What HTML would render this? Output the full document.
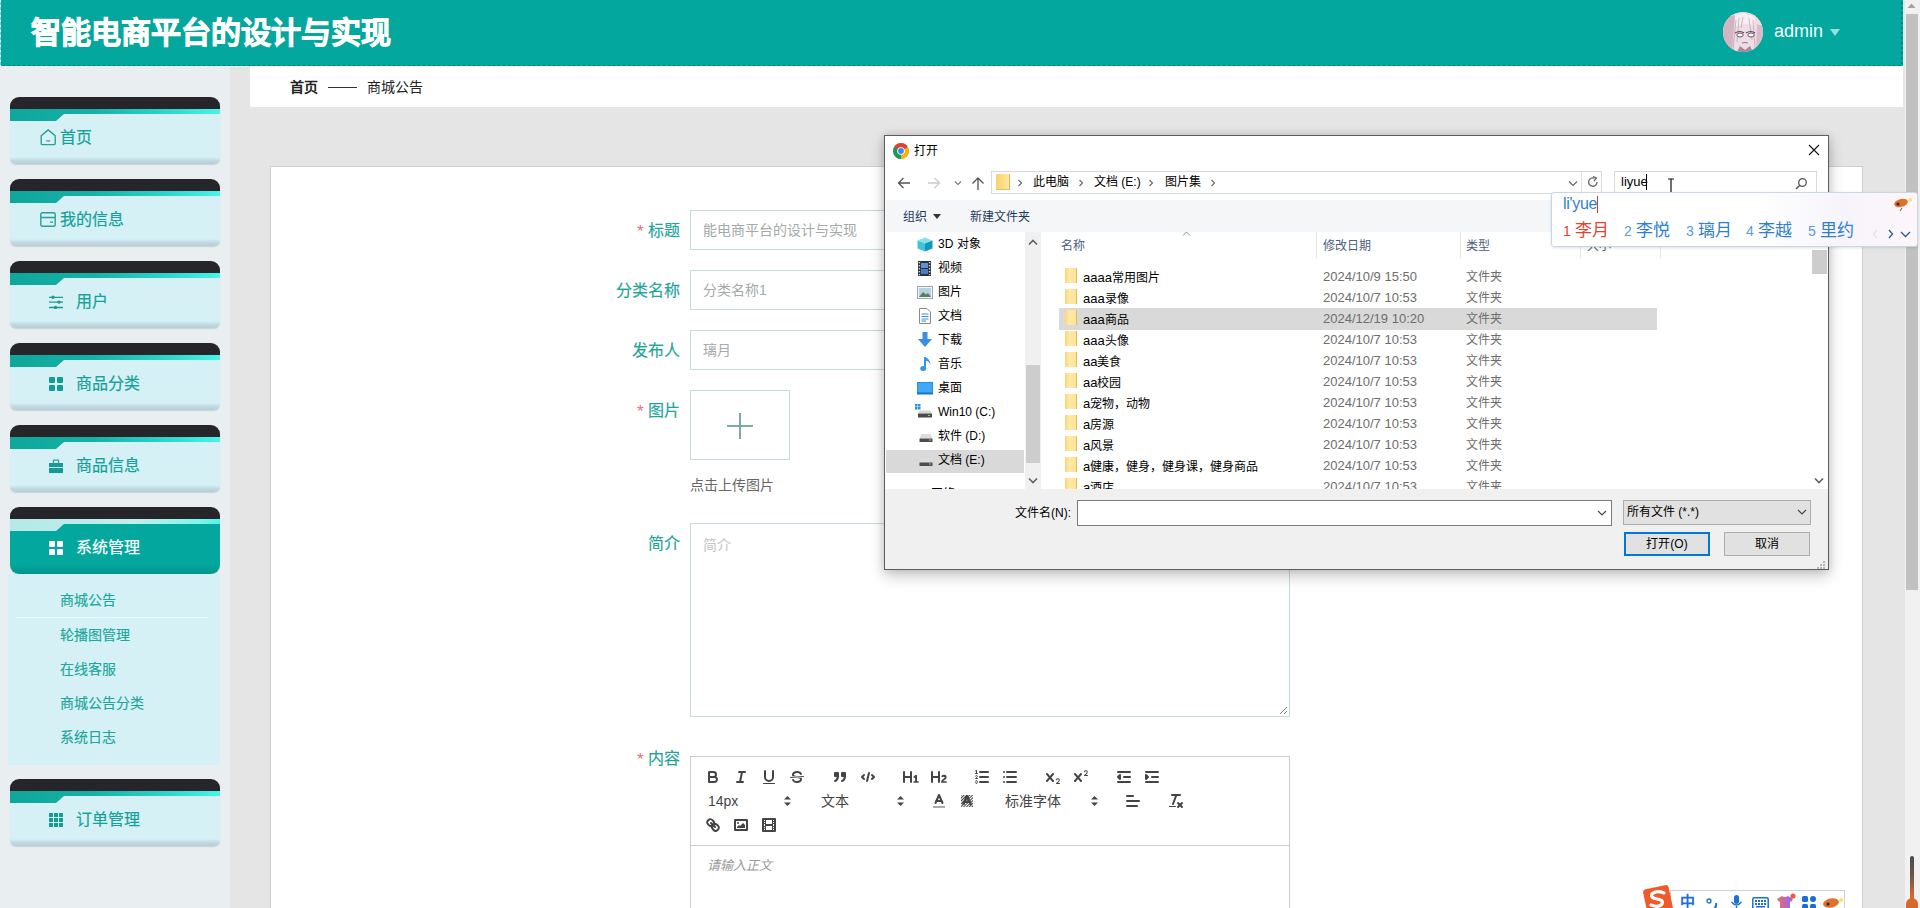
<!DOCTYPE html>
<html lang="zh-CN"><head><meta charset="utf-8">
<style>
*{box-sizing:border-box;margin:0;padding:0}
html,body{width:1920px;height:908px;overflow:hidden;font-family:"Liberation Sans",sans-serif;background:#e5e5e5;position:relative}
.a{position:absolute}
.nw{white-space:nowrap}
/* header */
#hdr{left:0;top:0;width:1903px;height:66px;background:#03a79d}
#hdrB{left:1px;top:65px;width:1902px;height:1.5px;background:repeating-linear-gradient(90deg,#03a79d 0 2px,#0a7f75 2px 4px,#03a79d 4px 5px)}
#hdrB2{left:0;top:66px;width:1903px;height:1px;background:#c9fbf2}
#hdrR{left:1901px;top:0;width:1.5px;height:66px;background:repeating-linear-gradient(180deg,#03a79d 0 2px,#0a7f75 2px 4px,#03a79d 4px 5px)}
#hdrR2{left:1902.5px;top:0;width:1.5px;height:67px;background:#d2fdf6}
#hdrL{left:0;top:0;width:1px;height:66px;background:repeating-linear-gradient(180deg,#e9fffb 0 2.5px,#7fd0c8 2.5px 5px)}
#title{left:31px;top:13px;font-size:30px;font-weight:900;color:#fff;-webkit-text-stroke:0.9px #fff;line-height:40px}
#avatar{left:1723px;top:12px;width:40px;height:40px;border-radius:50%;background:radial-gradient(circle at 50% 45%,#f6eef2 0,#ecdce4 45%,#c9a9b8 80%,#9b7d8c 100%);overflow:hidden}
#admin{left:1774px;top:20px;font-size:18px;color:#f2fffd;line-height:22px}
#tri{left:1830px;top:29px;width:0;height:0;border-left:5px solid transparent;border-right:5px solid transparent;border-top:7px solid #93e3dc}
/* sidebar */
#side{left:0;top:66px;width:230px;height:842px;background:#e9eff1}
.card{position:absolute;left:10px;width:210px;height:67px;border-radius:9px 9px 6px 6px;overflow:hidden;background:linear-gradient(180deg,#26262a 0,#26262a 14px,transparent 14px);box-shadow:0 1px 1px rgba(100,130,140,.25)}
.card .st{position:absolute;left:0;top:12px;width:100%;height:13px;background:linear-gradient(90deg,#0fa69b 0,#15b2a7 40%,#2cd6ca 75%,#47f5e8 100%)}
.card .bd{position:absolute;left:0;top:17px;width:100%;height:50px;background:linear-gradient(180deg,#d5f1f6 0,#d5f1f6 86%,#c0d9e2 93%,#b5cdd6 100%);clip-path:polygon(0 7px,46px 7px,54px 0,100% 0,100% 100%,0 100%)}
.card .lbl{position:absolute;top:30px;height:22px;line-height:22px;font-size:16px;color:#15a198;white-space:nowrap;-webkit-text-stroke:0.2px #15a198}
.card .ic{position:absolute}
.card.act .st{background:linear-gradient(90deg,#b6e9e6 0,#c0eeeb 60%,#7ff5ec 90%,#4ff4e8 100%)}
.card.act .bd{background:linear-gradient(180deg,#03a79d 0,#03a79d 80%,#02968c 100%)}
.card.act{border-radius:9px}
.card.act .lbl{color:#fff;-webkit-text-stroke:0.2px #fff}
#sub{left:8px;top:574px;width:212px;height:191px;background:#d5f1f6}
#sub .it{position:absolute;left:52px;font-size:14px;color:#20a69c;line-height:20px;white-space:nowrap;-webkit-text-stroke:0.15px #20a69c}
#sub .sep{position:absolute;left:8px;top:43px;width:192px;height:1px;background:#ecfbfd}
/* content */
#crumb{left:250px;top:66px;width:1653px;height:41px;background:#fff}
#form{left:270px;top:166px;width:1593px;height:760px;background:#fff;border:1px solid #cfcfcf}
.lab{position:absolute;font-size:16px;color:#22a399;white-space:nowrap;line-height:20px;text-align:right;-webkit-text-stroke:0.15px #22a399}
.star{position:absolute;font-size:17px;color:#ee6a83;line-height:17px}
.inp{position:absolute;left:690px;width:600px;height:40px;border:1px solid #c6dcd9;background:#fff;font-size:14px;color:#a3aaa9;padding-left:12px;line-height:38px;white-space:nowrap}
#sb{left:1905px;top:0;width:15px;height:908px;background:#f1f1f1}
#sbT{left:1906px;top:14px;width:12px;height:576px;background:#c1c1c1}
</style></head><body>
<div id="hdr" class="a"></div>
<div id="hdrB" class="a"></div>
<div id="hdrR" class="a"></div>
<div id="hdrB2" class="a"></div>
<div id="hdrR2" class="a"></div>
<div id="hdrL" class="a"></div>
<div id="title" class="a nw">智能电商平台的设计与实现</div>
<div id="avatar" class="a"><svg width="40" height="40" viewBox="0 0 40 40"><rect width="40" height="40" fill="#eddde4"/><path d="M0 10 Q6 4 12 3 L9 40 H0Z" fill="#c9a6b6" opacity=".75"/><path d="M40 14 L34 12 L33 40 H40Z" fill="#c5a2b3" opacity=".55"/><path d="M12 3 Q22 -1 32 5 L31 14 Q22 9 12 15Z" fill="#f6eef2"/><path d="M13 8 L10 38 M16 6 L14 30 M30 8 L32 36 M26 6 L29 28 M20 5 L18 16" stroke="#b08c9d" stroke-width=".8" opacity=".7"/><path d="M12 21 Q17 18 21 21 M23 21 Q28 18 32 21" stroke="#5a4350" stroke-width="1.2" fill="none"/><ellipse cx="17" cy="23" rx="3.2" ry="2" fill="#fff" stroke="#6b5260" stroke-width="1"/><ellipse cx="28" cy="23" rx="3.2" ry="2" fill="#fff" stroke="#6b5260" stroke-width="1"/><path d="M19 31 Q22 30 25 31" stroke="#8a6a7a" stroke-width=".9" fill="none"/><path d="M14 40 L17 34 L22 38 L27 34 L30 40Z" fill="#8d6b7c" opacity=".75"/></svg></div>
<div id="admin" class="a nw">admin</div>
<div id="tri" class="a"></div>

<div id="side" class="a"></div>

<div class="card" style="top:97px"><div class="st"></div><div class="bd"></div>
<svg class="ic" style="left:30px;top:32px" width="17" height="17" viewBox="0 0 17 17"><path d="M1.2 6.8 L8.2 0.9 L15.2 6.8 V14.6 Q15.2 15.6 14.2 15.6 H2.2 Q1.2 15.6 1.2 14.6 Z" fill="none" stroke="#2a9f97" stroke-width="1.4" stroke-linejoin="round"/><path d="M6.2 11.5 Q8.2 12.8 10.2 11.5" fill="none" stroke="#2a9f97" stroke-width="1.3"/></svg>
<div class="lbl" style="left:50px">首页</div></div>

<div class="card" style="top:179px"><div class="st"></div><div class="bd"></div>
<svg class="ic" style="left:30px;top:33px" width="16" height="15" viewBox="0 0 16 15"><rect x="0.8" y="0.8" width="14.4" height="13.4" rx="1.5" fill="none" stroke="#2a9f97" stroke-width="1.4"/><path d="M1 5.5 H15" stroke="#2a9f97" stroke-width="1.3"/><path d="M10 10.2 H13" stroke="#2a9f97" stroke-width="1.2"/></svg>
<div class="lbl" style="left:50px">我的信息</div></div>

<div class="card" style="top:261px"><div class="st"></div><div class="bd"></div>
<svg class="ic" style="left:39px;top:34px" width="14" height="14" viewBox="0 0 14 14"><path d="M0 2.3 H14 M0 7.1 H14 M0 12.5 H14" stroke="#1f9a90" stroke-width="1.3"/><circle cx="4" cy="2.3" r="1.7" fill="#1f9a90"/><circle cx="10" cy="7.1" r="1.7" fill="#1f9a90"/><circle cx="6.5" cy="12.5" r="1.7" fill="#1f9a90"/></svg>
<div class="lbl" style="left:66px">用户</div></div>

<div class="card" style="top:343px"><div class="st"></div><div class="bd"></div>
<svg class="ic" style="left:39px;top:34px" width="14" height="14" viewBox="0 0 14 14"><rect x="0" y="0" width="6" height="6" rx="1" fill="#139c92"/><rect x="8" y="0" width="6" height="6" rx="1" fill="#139c92"/><rect x="0" y="8" width="6" height="6" rx="1" fill="#139c92"/><rect x="8" y="8" width="6" height="6" rx="1" fill="#139c92"/></svg>
<div class="lbl" style="left:66px">商品分类</div></div>

<div class="card" style="top:425px"><div class="st"></div><div class="bd"></div>
<svg class="ic" style="left:39px;top:34px" width="14" height="14" viewBox="0 0 14 14"><path d="M4.5 4 V1.2 H9.5 V4" fill="none" stroke="#3f9f98" stroke-width="1.3"/><rect x="0" y="4" width="14" height="4" fill="#139c92"/><rect x="0" y="9" width="14" height="5" fill="#139c92"/></svg>
<div class="lbl" style="left:66px">商品信息</div></div>

<div class="card act" style="top:507px"><div class="st"></div><div class="bd"></div>
<svg class="ic" style="left:39px;top:34px" width="14" height="14" viewBox="0 0 14 14"><rect x="0" y="0" width="6" height="6" rx="1" fill="#fff"/><rect x="8" y="0" width="6" height="6" rx="1" fill="#fff"/><rect x="0" y="8" width="6" height="6" rx="1" fill="#fff"/><rect x="8" y="8" width="6" height="6" rx="1" fill="#fff"/></svg>
<div class="lbl" style="left:66px">系统管理</div></div>

<div id="sub" class="a">
<div class="it" style="top:16px">商城公告</div>
<div class="sep"></div>
<div class="it" style="top:51px">轮播图管理</div>
<div class="it" style="top:85px">在线客服</div>
<div class="it" style="top:119px">商城公告分类</div>
<div class="it" style="top:153px">系统日志</div>
</div>

<div class="card" style="top:779px"><div class="st"></div><div class="bd"></div>
<svg class="ic" style="left:39px;top:34px" width="14" height="14" viewBox="0 0 14 14"><g fill="#139c92"><rect x="0" y="0" width="4" height="4"/><rect x="5" y="0" width="4" height="4"/><rect x="10" y="0" width="4" height="4"/><rect x="0" y="5" width="4" height="4"/><rect x="5" y="5" width="4" height="4"/><rect x="10" y="5" width="4" height="4"/><rect x="0" y="10" width="4" height="4"/><rect x="5" y="10" width="4" height="4"/><rect x="10" y="10" width="4" height="4"/></g></svg>
<div class="lbl" style="left:66px">订单管理</div></div>

<div id="crumb" class="a"></div>
<div class="a nw" style="left:290px;top:77px;font-size:14px;font-weight:bold;color:#222;line-height:20px">首页</div>
<div class="a" style="left:328px;top:87px;width:29px;height:1px;background:#333"></div>
<div class="a nw" style="left:367px;top:77px;font-size:14px;color:#222;line-height:20px">商城公告</div>

<div id="form" class="a"></div>
<div id="sb" class="a"></div>
<div id="sbT" class="a"></div>
<svg class="a" style="left:1907px;top:3px" width="9" height="6" viewBox="0 0 9 6"><path d="M0.5 5 L4.5 0.5 L8.5 5Z" fill="#a3a3a3"/></svg>
<!-- form fields -->
<div class="star" style="left:637px;top:223px">*</div>
<div class="lab" style="left:648px;top:221px">标题</div>
<div class="inp" style="top:210px">能电商平台的设计与实现</div>
<div class="lab" style="left:616px;top:281px">分类名称</div>
<div class="inp" style="top:270px">分类名称1</div>
<div class="lab" style="left:632px;top:341px">发布人</div>
<div class="inp" style="top:330px">璃月</div>
<div class="star" style="left:637px;top:403px">*</div>
<div class="lab" style="left:648px;top:401px">图片</div>
<div class="a" style="left:690px;top:390px;width:100px;height:70px;border:1px solid #c6dcd9;background:#fff"></div>
<div class="a" style="left:727px;top:425px;width:26px;height:2px;background:#7fa9a6"></div>
<div class="a" style="left:739px;top:413px;width:2px;height:26px;background:#7fa9a6"></div>
<div class="a nw" style="left:690px;top:475px;font-size:14px;color:#666;line-height:20px">点击上传图片</div>
<div class="lab" style="left:648px;top:534px">简介</div>
<div class="a" style="left:690px;top:523px;width:600px;height:194px;border:1px solid #c6dcd9;background:#fff"></div>
<div class="a nw" style="left:703px;top:535px;font-size:14px;color:#c4c4c4;line-height:20px">简介</div>
<svg class="a" style="left:1279px;top:706px" width="9" height="9" viewBox="0 0 9 9"><path d="M8 1 L1 8 M8 5 L5 8" stroke="#777" stroke-width="1"/></svg>
<div class="star" style="left:637px;top:751px">*</div>
<div class="lab" style="left:648px;top:749px">内容</div>
<div class="a" style="left:690px;top:756px;width:600px;height:200px;border:1px solid #ccc;background:#fff"></div>
<div class="a" style="left:691px;top:845px;width:598px;height:1px;background:#ccc"></div>
<div class="a nw" style="left:707px;top:856px;font-size:13px;color:#999;font-style:italic;line-height:20px">请输入正文</div>
<!-- quill toolbar -->
<style>
.qb{position:absolute;width:18px;height:18px}
.qb .s{fill:none;stroke:#444;stroke-width:2;stroke-linecap:round;stroke-linejoin:round}
.qb .t{fill:none;stroke:#444;stroke-width:1;stroke-linecap:round;stroke-linejoin:round}
.qb .f{fill:#444}
.qpk{position:absolute;font-size:14px;color:#444;line-height:20px;white-space:nowrap}
</style>
<!-- row1 y=768 -->
<svg class="qb" style="left:704px;top:768px" viewBox="0 0 18 18"><path class="s" d="M5,4H9.5A2.5,2.5,0,0,1,12,6.5v0A2.5,2.5,0,0,1,9.5,9H5A0,0,0,0,1,5,9V4A0,0,0,0,1,5,4Z"/><path class="s" d="M5,9h5.5A2.5,2.5,0,0,1,13,11.5v0A2.5,2.5,0,0,1,10.5,14H5a0,0,0,0,1,0,0V9A0,0,0,0,1,5,9Z"/></svg>
<svg class="qb" style="left:732px;top:768px" viewBox="0 0 18 18"><line class="s" x1="7" x2="13" y1="4" y2="4"/><line class="s" x1="5" x2="11" y1="14" y2="14"/><line class="s" x1="8" x2="10" y1="14" y2="4"/></svg>
<svg class="qb" style="left:760px;top:768px" viewBox="0 0 18 18"><path class="s" d="M5,3V9a4.012,4.012,0,0,0,4,4H9a4.012,4.012,0,0,0,4-4V3"/><rect class="f" height="1" rx="0.5" ry="0.5" width="12" x="3" y="15"/></svg>
<svg class="qb" style="left:788px;top:768px" viewBox="0 0 18 18"><line class="t" x1="15.5" x2="2.5" y1="8.5" y2="9.5"/><path class="f" d="M9.007,8C6.542,7.791,6,7.519,6,6.5,6,5.792,7.283,5,9,5c1.571,0,2.765.679,2.969,1.309a1,1,0,0,0,1.9-.617C13.356,4.106,11.354,3,9,3,6.2,3,4,4.538,4,6.5a3.2,3.2,0,0,0,.5,1.843Z"/><path class="f" d="M8.984,10C11.457,10.208,12,10.479,12,11.5c0,.708-1.283,1.5-3,1.5-1.571,0-2.765-.679-2.969-1.309a1,1,0,1,0-1.9.617C4.644,13.894,6.646,15,9,15c2.8,0,5-1.538,5-3.5a3.2,3.2,0,0,0-.5-1.843Z"/></svg>
<svg class="qb" style="left:831px;top:768px" viewBox="0 0 18 18"><rect class="f s" height="3" width="3" x="4" y="5"/><rect class="f s" height="3" width="3" x="11" y="5"/><path class="f s" d="M7,8c0,4.031-3,5-3,5"/><path class="f s" d="M14,8c0,4.031-3,5-3,5"/></svg>
<svg class="qb" style="left:859px;top:768px" viewBox="0 0 18 18"><polyline class="s" points="5 7 3 9 5 11"/><polyline class="s" points="13 7 15 9 13 11"/><line class="s" x1="10" x2="8" y1="5" y2="13"/></svg>
<svg class="qb" style="left:902px;top:768px" viewBox="0 0 18 18"><path class="f" d="M10,4V14a1,1,0,0,1-2,0V10H3v4a1,1,0,0,1-2,0V4A1,1,0,0,1,3,4V8H8V4a1,1,0,0,1,2,0Zm6.06787,9.209H14.98975V7.59863a.54085.54085,0,0,0-.605-.60547h-.62744a1.01119,1.01119,0,0,0-.748.29688L11.645,8.56641a.5435.5435,0,0,0-.022.8584l.28613.30762a.53861.53861,0,0,0,.84717.0332l.09912-.08789a1.2137,1.2137,0,0,0,.2417-.35254h.02246s-.01123.30859-.01123.60547V13.209H12.041a.54085.54085,0,0,0-.605.60547v.43945a.54085.54085,0,0,0,.605.60547h4.02686a.54085.54085,0,0,0,.605-.60547v-.43945A.54085.54085,0,0,0,16.06787,13.209Z"/></svg>
<svg class="qb" style="left:930px;top:768px" viewBox="0 0 18 18"><path class="f" d="M16.73975,13.81445v.43945a.54085.54085,0,0,1-.605.60547H11.855a.58392.58392,0,0,1-.64893-.60547V14.0127c0-2.90527,3.39941-3.42187,3.39941-4.55469a.77675.77675,0,0,0-.84717-.78125,1.17684,1.17684,0,0,0-.83594.38477c-.2749.26367-.561.374-.85791.13184l-.4292-.34082c-.30811-.24219-.38525-.51758-.1543-.81445a2.97155,2.97155,0,0,1,2.45361-1.17676,2.45393,2.45393,0,0,1,2.68408,2.40918c0,2.45312-3.1792,2.92676-3.27832,3.93848h2.79443A.54085.54085,0,0,1,16.73975,13.81445ZM9,3A.99974.99974,0,0,0,8,4V8H3V4A1,1,0,0,0,1,4V14a1,1,0,0,0,2,0V10H8v4a1,1,0,0,0,2,0V4A.99974.99974,0,0,0,9,3Z"/></svg>
<svg class="qb" style="left:973px;top:768px" viewBox="0 0 18 18"><line class="s" x1="7" x2="15" y1="4" y2="4"/><line class="s" x1="7" x2="15" y1="9" y2="9"/><line class="s" x1="7" x2="15" y1="14" y2="14"/><line class="t" x1="2.5" x2="4.5" y1="5.5" y2="5.5"/><path class="f" d="M3.5,6A0.5,0.5,0,0,1,3,5.5V3.085l-0.276.138A0.5,0.5,0,0,1,2.053,3c-0.124-.247-0.023-0.324.224-0.447l1-.5A0.5,0.5,0,0,1,4,2.5v3A0.5,0.5,0,0,1,3.5,6Z"/><path class="t" d="M4.5,10.5h-2c0-.234,1.85-1.076,1.85-2.234A0.959,0.959,0,0,0,2.5,8.156"/><path class="t" d="M2.5,14.846a0.959,0.959,0,0,0,1.85-.109A0.7,0.7,0,0,0,3.75,14a0.688,0.688,0,0,0,.6-0.736,0.959,0.959,0,0,0-1.85-.109"/></svg>
<svg class="qb" style="left:1001px;top:768px" viewBox="0 0 18 18"><line class="s" x1="6" x2="15" y1="4" y2="4"/><line class="s" x1="6" x2="15" y1="9" y2="9"/><line class="s" x1="6" x2="15" y1="14" y2="14"/><line class="s" x1="3" x2="3" y1="4" y2="4"/><line class="s" x1="3" x2="3" y1="9" y2="9"/><line class="s" x1="3" x2="3" y1="14" y2="14"/></svg>
<svg class="qb" style="left:1044px;top:768px" viewBox="0 0 18 18"><path class="f" d="M15.5,15H13.861a3.858,3.858,0,0,0,1.914-2.975,1.8,1.8,0,0,0-1.6-1.751A1.921,1.921,0,0,0,12.021,11.7a0.50013,0.50013,0,1,0,.957.291h0a0.914,0.914,0,0,1,1.053-.725,0.81,0.81,0,0,1,.744.762c0,1.076-1.16971,1.86982-1.93971,2.43082A1.45639,1.45639,0,0,0,12,15.5a0.5,0.5,0,0,0,.5.5h3A0.5,0.5,0,0,0,15.5,15Z"/><path class="f" d="M9.65,5.241a1,1,0,0,0-1.409.108L6,7.964,3.759,5.349A1,1,0,0,0,2.192,6.59178Q2.21541,6.6213,2.241,6.649L4.684,9.5,2.241,12.35A1,1,0,0,0,3.71,13.70722q0.02557-.02768.049-0.05722L6,11.036,8.241,13.65a1,1,0,1,0,1.567-1.24277Q9.78459,12.3777,9.759,12.35L7.316,9.5,9.759,6.651A1,1,0,0,0,9.65,5.241Z"/></svg>
<svg class="qb" style="left:1072px;top:768px" viewBox="0 0 18 18"><path class="f" d="M15.5,7H13.861a4.015,4.015,0,0,0,1.914-2.975,1.8,1.8,0,0,0-1.6-1.751A1.922,1.922,0,0,0,12.021,3.7a0.5,0.5,0,1,0,.957.291,0.917,0.917,0,0,1,1.053-.725,0.81,0.81,0,0,1,.744.762c0,1.077-1.164,1.925-1.934,2.486A1.423,1.423,0,0,0,12,7.5a0.5,0.5,0,0,0,.5.5h3A0.5,0.5,0,0,0,15.5,7Z"/><path class="f" d="M9.651,5.241a1,1,0,0,0-1.41.108L6,7.964,3.759,5.349a1,1,0,1,0-1.519,1.3L4.683,9.5,2.241,12.35a1,1,0,1,0,1.519,1.3L6,11.036,8.241,13.65a1,1,0,0,0,1.519-1.3L7.317,9.5,9.759,6.651A1,1,0,0,0,9.651,5.241Z"/></svg>
<svg class="qb" style="left:1115px;top:768px" viewBox="0 0 18 18"><line class="s" x1="3" x2="15" y1="14" y2="14"/><line class="s" x1="3" x2="15" y1="4" y2="4"/><line class="s" x1="9" x2="15" y1="9" y2="9"/><polyline class="s" points="5 7 5 11 3 9 5 7"/></svg>
<svg class="qb" style="left:1143px;top:768px" viewBox="0 0 18 18"><line class="s" x1="3" x2="15" y1="14" y2="14"/><line class="s" x1="3" x2="15" y1="4" y2="4"/><line class="s" x1="9" x2="15" y1="9" y2="9"/><polyline class="f s" points="3 7 3 11 5 9 3 7"/></svg>
<!-- row2 y=792 -->
<div class="qpk" style="left:708px;top:791px">14px</div>
<svg class="qb" style="left:779px;top:792px" viewBox="0 0 18 18"><polygon class="f" points="5 7.5 8.5 4 12 7.5"/><polygon class="f" points="5 10.5 8.5 14 12 10.5"/></svg>
<div class="qpk" style="left:821px;top:791px">文本</div>
<svg class="qb" style="left:892px;top:792px" viewBox="0 0 18 18"><polygon class="f" points="5 7.5 8.5 4 12 7.5"/><polygon class="f" points="5 10.5 8.5 14 12 10.5"/></svg>
<svg class="qb" style="left:930px;top:792px" viewBox="0 0 18 18"><line x1="3" x2="15" y1="15" y2="15" stroke="#aaa" stroke-width="2"/><polyline class="s" points="5.5 11 9 3 12.5 11"/><line class="s" x1="11.63" x2="6.38" y1="9" y2="9"/></svg>
<svg class="qb" style="left:958px;top:792px" viewBox="0 0 18 18"><defs><pattern id="hp" width="2" height="2" patternUnits="userSpaceOnUse" patternTransform="rotate(45)"><rect width="1" height="2" fill="#444"/></pattern></defs><rect x="3" y="3" width="12" height="12" fill="url(#hp)"/><polyline class="s" points="5.5 12 9 4 12.5 12" stroke="#fff" stroke-width="3"/><polyline class="s" points="5.5 12 9 4 12.5 12"/><line class="s" x1="11.63" x2="6.38" y1="10" y2="10"/></svg>
<div class="qpk" style="left:1005px;top:791px">标准字体</div>
<svg class="qb" style="left:1086px;top:792px" viewBox="0 0 18 18"><polygon class="f" points="5 7.5 8.5 4 12 7.5"/><polygon class="f" points="5 10.5 8.5 14 12 10.5"/></svg>
<svg class="qb" style="left:1124px;top:792px" viewBox="0 0 18 18"><line class="s" x1="3" x2="15" y1="9" y2="9"/><line class="s" x1="3" x2="13" y1="14" y2="14"/><line class="s" x1="3" x2="9" y1="4" y2="4"/></svg>
<svg class="qb" style="left:1167px;top:792px" viewBox="0 0 18 18"><line class="s" x1="5" x2="13" y1="3" y2="3"/><line class="s" x1="6" x2="9.35" y1="12" y2="3"/><line class="s" x1="11" x2="15" y1="11" y2="15"/><line class="s" x1="15" x2="11" y1="11" y2="15"/><rect class="f" height="1" rx="0.5" ry="0.5" width="7" x="2" y="14"/></svg>
<!-- row3 y=816 -->
<svg class="qb" style="left:704px;top:816px" viewBox="0 0 18 18"><line class="s" x1="7" x2="11" y1="7" y2="11"/><path class="s" d="M8.9,4.577a3.476,3.476,0,0,1,.36,4.679A3.476,3.476,0,0,1,4.577,8.9C3.185,7.5,2.035,6.4,4.217,4.217S7.5,3.185,8.9,4.577Z"/><path class="s" d="M13.423,9.1a3.476,3.476,0,0,0-4.679-.36,3.476,3.476,0,0,0,.36,4.679c1.392,1.392,2.5,2.542,4.679.36S14.815,10.5,13.423,9.1Z"/></svg>
<svg class="qb" style="left:732px;top:816px" viewBox="0 0 18 18"><rect class="s" height="10" width="12" x="3" y="4"/><circle class="f" cx="6" cy="7" r="1"/><polyline class="f" points="5 12 5 11 7 9 8 10 11 7 13 9 13 12 5 12"/></svg>
<svg class="qb" style="left:760px;top:816px" viewBox="0 0 18 18"><rect class="s" height="12" width="12" x="3" y="3"/><rect class="f" height="12" width="1" x="5" y="3"/><rect class="f" height="12" width="1" x="12" y="3"/><rect class="f" height="2" width="8" x="5" y="8"/><rect class="f" height="1" width="3" x="3" y="5"/><rect class="f" height="1" width="3" x="3" y="7"/><rect class="f" height="1" width="3" x="3" y="10"/><rect class="f" height="1" width="3" x="3" y="12"/><rect class="f" height="1" width="3" x="12" y="5"/><rect class="f" height="1" width="3" x="12" y="7"/><rect class="f" height="1" width="3" x="12" y="10"/><rect class="f" height="1" width="3" x="12" y="12"/></svg>
<style>
#dlg{left:884px;top:135px;width:945px;height:435px;background:#fff;border:1px solid #5c5c5c;box-shadow:0 6px 14px rgba(0,0,0,.22),0 0 8px rgba(0,0,0,.12);overflow:hidden}
#dlg .t{position:absolute;font-size:12px;line-height:16px;color:#000;white-space:nowrap}
.dr{position:absolute;height:21px;font-size:12px;line-height:21px;white-space:nowrap}
.fo{position:absolute;width:12px;height:15px;background:linear-gradient(90deg,#f8d775 0,#ffe9a6 40%,#ffe394 100%);border-right:1px solid #e8b94c}
.nv{position:absolute;left:52px;font-size:12px;line-height:24px;color:#000;white-space:nowrap}
.btn{position:absolute;background:#e1e1e1;border:1px solid #adadad;font-size:12px;line-height:22px;text-align:center;color:#000}
</style>
<div id="dlg" class="a">
 <!-- title -->
 <svg class="a" style="left:8px;top:7px" width="16" height="16" viewBox="0 0 16 16"><circle cx="8" cy="8" r="7.8" fill="#db4437"/><path d="M8 8 L1.2 4.1 A7.8 7.8 0 0 0 8 15.8 Z" fill="#0f9d58"/><path d="M8 8 L14.8 4.1 A7.8 7.8 0 0 1 8 15.8 Z" fill="#f4b400"/><path d="M8 8 L1.2 4.1 A7.8 7.8 0 0 1 14.8 4.1 Z" fill="#db4437"/><circle cx="8" cy="8" r="3.8" fill="#fff"/><circle cx="8" cy="8" r="2.9" fill="#4285f4"/></svg>
 <div class="t" style="left:29px;top:7px">打开</div>
 <svg class="a" style="left:923px;top:8px" width="12" height="12" viewBox="0 0 12 12"><path d="M1 1 L11 11 M11 1 L1 11" stroke="#111" stroke-width="1.1"/></svg>
 <!-- nav -->
 <svg class="a" style="left:12px;top:40px" width="14" height="14" viewBox="0 0 14 14"><path d="M13 7 H1.5 M6.5 2 L1.5 7 L6.5 12" fill="none" stroke="#555" stroke-width="1.3"/></svg>
 <svg class="a" style="left:42px;top:40px" width="14" height="14" viewBox="0 0 14 14"><path d="M1 7 H12.5 M7.5 2 L12.5 7 L7.5 12" fill="none" stroke="#c9c9c9" stroke-width="1.3"/></svg>
 <svg class="a" style="left:69px;top:44px" width="8" height="6" viewBox="0 0 8 6"><path d="M1 1.5 L4 4.5 L7 1.5" fill="none" stroke="#777" stroke-width="1.1"/></svg>
 <svg class="a" style="left:86px;top:40px" width="14" height="15" viewBox="0 0 14 15"><path d="M7 14 V2 M1.5 7.5 L7 2 L12.5 7.5" fill="none" stroke="#555" stroke-width="1.3"/></svg>
 <div class="a" style="left:106px;top:35px;width:611px;height:23px;border:1px solid #d9d9d9"></div>
 <div class="a" style="left:111px;top:38px;width:14px;height:16px;background:linear-gradient(90deg,#f7d36a,#ffe8a3);border-right:1px solid #e2b64a;border-bottom:1px solid #e9c15a"></div>
 <svg class="a" style="left:132px;top:43px" width="6" height="8" viewBox="0 0 6 8"><path d="M1.5 1 L4.5 4 L1.5 7" fill="none" stroke="#666" stroke-width="1.1"/></svg>
 <div class="t" style="left:148px;top:38px">此电脑</div>
 <svg class="a" style="left:193px;top:43px" width="6" height="8" viewBox="0 0 6 8"><path d="M1.5 1 L4.5 4 L1.5 7" fill="none" stroke="#666" stroke-width="1.1"/></svg>
 <div class="t" style="left:209px;top:38px">文档 (E:)</div>
 <svg class="a" style="left:263px;top:43px" width="6" height="8" viewBox="0 0 6 8"><path d="M1.5 1 L4.5 4 L1.5 7" fill="none" stroke="#666" stroke-width="1.1"/></svg>
 <div class="t" style="left:280px;top:38px">图片集</div>
 <svg class="a" style="left:325px;top:43px" width="6" height="8" viewBox="0 0 6 8"><path d="M1.5 1 L4.5 4 L1.5 7" fill="none" stroke="#666" stroke-width="1.1"/></svg>
 <svg class="a" style="left:683px;top:44px" width="10" height="7" viewBox="0 0 10 7"><path d="M1 1.5 L5 5.5 L9 1.5" fill="none" stroke="#666" stroke-width="1.2"/></svg>
 <div class="a" style="left:696px;top:36px;width:1px;height:21px;background:#e3e3e3"></div>
 <svg class="a" style="left:702px;top:40px" width="12" height="12" viewBox="0 0 12 12"><path d="M10 6 A4.2 4.2 0 1 1 7.5 2.2" fill="none" stroke="#666" stroke-width="1.3"/><path d="M6 0.5 L9.5 2 L7 5" fill="none" stroke="#666" stroke-width="1.2"/></svg>
 <div class="a" style="left:729px;top:35px;width:203px;height:23px;border:1px solid #d9d9d9"></div>
 <div class="t" style="left:736px;top:38px;font-size:13px">liyue</div>
 <div class="a" style="left:761px;top:38px;width:1px;height:16px;background:#000"></div>
 <svg class="a" style="left:781px;top:42px" width="10" height="17" viewBox="0 0 10 17"><path d="M2 1 H8 M5 1 V16 M2 16 H8" fill="none" stroke="#111" stroke-width="1.2"/></svg>
 <svg class="a" style="left:910px;top:41px" width="13" height="13" viewBox="0 0 13 13"><circle cx="7.5" cy="5.5" r="3.8" fill="none" stroke="#555" stroke-width="1.3"/><path d="M4.8 8.2 L1 12" stroke="#555" stroke-width="1.5"/></svg>
 <!-- toolbar -->
 <div class="a" style="left:1px;top:64px;width:943px;height:32px;background:#f5f6f7"></div>
 <div class="t" style="left:18px;top:73px;color:#1e395b">组织</div>
 <svg class="a" style="left:48px;top:78px" width="8" height="5" viewBox="0 0 8 5"><path d="M0 0 H8 L4 5Z" fill="#333"/></svg>
 <div class="t" style="left:85px;top:73px;color:#1e395b">新建文件夹</div>
 <!-- nav pane -->
 <div class="a" style="left:1px;top:314px;width:138px;height:23px;background:#d9d9d9"></div>
 <div class="a" style="left:140px;top:96px;width:16px;height:258px;background:#f0f0f0"></div>
 <div class="a" style="left:141px;top:229px;width:14px;height:98px;background:#cdcdcd"></div>
 <svg class="a" style="left:143px;top:103px" width="10" height="7" viewBox="0 0 10 7"><path d="M1 5.5 L5 1.5 L9 5.5" fill="none" stroke="#606060" stroke-width="1.6"/></svg>
 <svg class="a" style="left:143px;top:341px" width="10" height="7" viewBox="0 0 10 7"><path d="M1 1.5 L5 5.5 L9 1.5" fill="none" stroke="#606060" stroke-width="1.6"/></svg>
 <!-- nav items -->
 <svg class="a" style="left:32px;top:101px" width="16" height="15" viewBox="0 0 16 15"><path d="M8 0.5 L15.5 3.5 L8 6.5 L0.5 3.5Z" fill="#7fe3f0"/><path d="M0.5 3.5 L8 6.5 V14.5 L0.5 11.5Z" fill="#3fc2da"/><path d="M15.5 3.5 L8 6.5 V14.5 L15.5 11.5Z" fill="#1496b8"/></svg>
 <div class="nv" style="top:96px;left:53px">3D 对象</div>
 <svg class="a" style="left:33px;top:125px" width="13" height="15" viewBox="0 0 13 15"><rect x="0" y="0" width="13" height="15" fill="#2b2f3a"/><rect x="3" y="2" width="7" height="5" fill="#5b8fd6"/><rect x="3" y="8" width="7" height="5" fill="#4a7dc6"/><g fill="#ddd"><rect x="0.7" y="1" width="1.4" height="1.4"/><rect x="0.7" y="4" width="1.4" height="1.4"/><rect x="0.7" y="7" width="1.4" height="1.4"/><rect x="0.7" y="10" width="1.4" height="1.4"/><rect x="0.7" y="13" width="1.4" height="1.2"/><rect x="10.9" y="1" width="1.4" height="1.4"/><rect x="10.9" y="4" width="1.4" height="1.4"/><rect x="10.9" y="7" width="1.4" height="1.4"/><rect x="10.9" y="10" width="1.4" height="1.4"/><rect x="10.9" y="13" width="1.4" height="1.2"/></g></svg>
 <div class="nv" style="top:120px;left:53px">视频</div>
 <svg class="a" style="left:32px;top:150px" width="16" height="13" viewBox="0 0 16 13"><rect x="0.5" y="0.5" width="15" height="12" fill="#f4f4f4" stroke="#9aa7b3"/><rect x="2" y="2" width="12" height="9" fill="#b7d1e6"/><path d="M2 11 L6 6 L9 8.5 L11 7 L14 11Z" fill="#5b7f5c"/></svg>
 <div class="nv" style="top:144px;left:53px">图片</div>
 <svg class="a" style="left:34px;top:172px" width="12" height="16" viewBox="0 0 12 16"><path d="M0.5 0.5 H8 L11.5 4 V15.5 H0.5Z" fill="#fff" stroke="#8a8a8a"/><path d="M2.5 6 H9.5 M2.5 8.5 H9.5 M2.5 11 H9.5 M2.5 13 H7" stroke="#3a8fd6" stroke-width="1"/></svg>
 <div class="nv" style="top:168px;left:53px">文档</div>
 <svg class="a" style="left:32px;top:196px" width="16" height="16" viewBox="0 0 16 16"><path d="M5.5 0 H10.5 V7 H15 L8 15 L1 7 H5.5Z" fill="#3b8fe0"/></svg>
 <div class="nv" style="top:192px;left:53px">下载</div>
 <svg class="a" style="left:35px;top:220px" width="12" height="16" viewBox="0 0 12 16"><path d="M5 1 V12" stroke="#3b95e4" stroke-width="2"/><ellipse cx="3.2" cy="12.5" rx="3" ry="2.5" fill="#3b95e4"/><path d="M5 1 Q10 3 10.5 8 Q9 5 5.5 4.5" fill="#3b95e4"/></svg>
 <div class="nv" style="top:216px;left:53px">音乐</div>
 <svg class="a" style="left:32px;top:246px" width="16" height="13" viewBox="0 0 16 13"><rect x="0" y="0" width="16" height="12" fill="#1f8ee6"/><rect x="1" y="1" width="14" height="9" fill="#40a9f5"/><rect x="0" y="11" width="16" height="1.5" fill="#1976c9"/></svg>
 <div class="nv" style="top:240px;left:53px">桌面</div>
 <svg class="a" style="left:30px;top:268px" width="18" height="14" viewBox="0 0 18 14"><g fill="#2a8fe0"><rect x="0" y="0" width="2.5" height="2.5"/><rect x="3" y="0" width="2.5" height="2.5"/><rect x="0" y="3" width="2.5" height="2.5"/><rect x="3" y="3" width="2.5" height="2.5"/></g><path d="M3 9.5 L5 6.5 H15 L17 9.5Z" fill="#d6d6d6"/><rect x="3" y="9.5" width="14" height="4" fill="#4a4a4a"/><rect x="13" y="11" width="2" height="1" fill="#7fdc5b"/></svg>
 <div class="nv" style="top:264px;left:53px">Win10 (C:)</div>
 <svg class="a" style="left:33px;top:297px" width="16" height="10" viewBox="0 0 16 10"><path d="M1.5 5.5 L3.5 1 H12.5 L14.5 5.5Z" fill="#dcdcdc"/><rect x="1.5" y="5.5" width="13" height="3.5" fill="#4d4d4d"/><rect x="11" y="6.5" width="2" height="1" fill="#8fdc6f"/></svg>
 <div class="nv" style="top:288px;left:53px">软件 (D:)</div>
 <svg class="a" style="left:33px;top:321px" width="16" height="10" viewBox="0 0 16 10"><path d="M1.5 5.5 L3.5 1 H12.5 L14.5 5.5Z" fill="#dcdcdc"/><rect x="1.5" y="5.5" width="13" height="3.5" fill="#4d4d4d"/><rect x="11" y="6.5" width="2" height="1" fill="#8fdc6f"/></svg>
 <div class="nv" style="top:312px;left:53px">文档 (E:)</div>
 <svg class="a" style="left:29px;top:351px" width="16" height="12" viewBox="0 0 16 12"><circle cx="7" cy="8" r="5" fill="#9fc6e8"/><circle cx="7" cy="8" r="3" fill="#5fa0d8"/></svg>
 <div class="nv" style="top:346px;left:46px">网络</div>
 <!-- list header -->
 <div class="a" style="left:158px;top:96px;width:786px;height:257px;background:#fff"></div>
 <div class="t" style="left:176px;top:102px;color:#4c607a">名称</div>
 <svg class="a" style="left:297px;top:95px" width="9" height="5" viewBox="0 0 9 5"><path d="M1 4.5 L4.5 1 L8 4.5" fill="none" stroke="#888" stroke-width="1"/></svg>
 <div class="a" style="left:431px;top:96px;width:1px;height:26px;background:#e5e5e5"></div>
 <div class="t" style="left:438px;top:102px;color:#4c607a">修改日期</div>
 <div class="a" style="left:575px;top:96px;width:1px;height:26px;background:#e5e5e5"></div>
 <div class="t" style="left:581px;top:102px;color:#4c607a">类型</div>
 <div class="a" style="left:695px;top:96px;width:1px;height:26px;background:#e5e5e5"></div>
 <div class="t" style="left:702px;top:102px;color:#4c607a">大小</div>
 <div class="a" style="left:775px;top:96px;width:1px;height:26px;background:#e5e5e5"></div>
 <!-- selected row -->
 <div class="a" style="left:174px;top:172px;width:598px;height:22px;background:#d9d9d9"></div>
 <div class="fo" style="left:180px;top:132px"></div>
 <div class="dr" style="left:198px;top:131px;color:#000"><span style="font-size:13px">aaaa</span>常用图片</div>
 <div class="dr" style="left:438px;top:130px;color:#6d6d6d;font-size:13px">2024/10/9 15:50</div>
 <div class="dr" style="left:581px;top:131px;color:#6d6d6d">文件夹</div>
 <div class="fo" style="left:180px;top:153px"></div>
 <div class="dr" style="left:198px;top:152px;color:#000"><span style="font-size:13px">aaa</span>录像</div>
 <div class="dr" style="left:438px;top:151px;color:#6d6d6d;font-size:13px">2024/10/7 10:53</div>
 <div class="dr" style="left:581px;top:152px;color:#6d6d6d">文件夹</div>
 <div class="fo" style="left:180px;top:174px"></div>
 <div class="dr" style="left:198px;top:173px;color:#000"><span style="font-size:13px">aaa</span>商品</div>
 <div class="dr" style="left:438px;top:172px;color:#6d6d6d;font-size:13px">2024/12/19 10:20</div>
 <div class="dr" style="left:581px;top:173px;color:#6d6d6d">文件夹</div>
 <div class="fo" style="left:180px;top:195px"></div>
 <div class="dr" style="left:198px;top:194px;color:#000"><span style="font-size:13px">aaa</span>头像</div>
 <div class="dr" style="left:438px;top:193px;color:#6d6d6d;font-size:13px">2024/10/7 10:53</div>
 <div class="dr" style="left:581px;top:194px;color:#6d6d6d">文件夹</div>
 <div class="fo" style="left:180px;top:216px"></div>
 <div class="dr" style="left:198px;top:215px;color:#000"><span style="font-size:13px">aa</span>美食</div>
 <div class="dr" style="left:438px;top:214px;color:#6d6d6d;font-size:13px">2024/10/7 10:53</div>
 <div class="dr" style="left:581px;top:215px;color:#6d6d6d">文件夹</div>
 <div class="fo" style="left:180px;top:237px"></div>
 <div class="dr" style="left:198px;top:236px;color:#000"><span style="font-size:13px">aa</span>校园</div>
 <div class="dr" style="left:438px;top:235px;color:#6d6d6d;font-size:13px">2024/10/7 10:53</div>
 <div class="dr" style="left:581px;top:236px;color:#6d6d6d">文件夹</div>
 <div class="fo" style="left:180px;top:258px"></div>
 <div class="dr" style="left:198px;top:257px;color:#000"><span style="font-size:13px">a</span>宠物，动物</div>
 <div class="dr" style="left:438px;top:256px;color:#6d6d6d;font-size:13px">2024/10/7 10:53</div>
 <div class="dr" style="left:581px;top:257px;color:#6d6d6d">文件夹</div>
 <div class="fo" style="left:180px;top:279px"></div>
 <div class="dr" style="left:198px;top:278px;color:#000"><span style="font-size:13px">a</span>房源</div>
 <div class="dr" style="left:438px;top:277px;color:#6d6d6d;font-size:13px">2024/10/7 10:53</div>
 <div class="dr" style="left:581px;top:278px;color:#6d6d6d">文件夹</div>
 <div class="fo" style="left:180px;top:300px"></div>
 <div class="dr" style="left:198px;top:299px;color:#000"><span style="font-size:13px">a</span>风景</div>
 <div class="dr" style="left:438px;top:298px;color:#6d6d6d;font-size:13px">2024/10/7 10:53</div>
 <div class="dr" style="left:581px;top:299px;color:#6d6d6d">文件夹</div>
 <div class="fo" style="left:180px;top:321px"></div>
 <div class="dr" style="left:198px;top:320px;color:#000"><span style="font-size:13px">a</span>健康，健身，健身课，健身商品</div>
 <div class="dr" style="left:438px;top:319px;color:#6d6d6d;font-size:13px">2024/10/7 10:53</div>
 <div class="dr" style="left:581px;top:320px;color:#6d6d6d">文件夹</div>
 <div class="fo" style="left:180px;top:342px"></div>
 <div class="dr" style="left:198px;top:341px;color:#000"><span style="font-size:13px">a</span>酒店</div>
 <div class="dr" style="left:438px;top:340px;color:#6d6d6d;font-size:13px">2024/10/7 10:53</div>
 <div class="dr" style="left:581px;top:341px;color:#6d6d6d">文件夹</div>
 <!-- list scrollbar -->
 <div class="a" style="left:926px;top:96px;width:17px;height:257px;background:#fff"></div>
 <div class="a" style="left:927px;top:114px;width:15px;height:24px;background:#cdcdcd"></div>
 <svg class="a" style="left:929px;top:341px" width="10" height="7" viewBox="0 0 10 7"><path d="M1 1.5 L5 5.5 L9 1.5" fill="none" stroke="#606060" stroke-width="1.6"/></svg>
 <!-- bottom -->
 <div class="a" style="left:0;top:353px;width:945px;height:82px;background:#f0f0f0"></div>
 <div class="t" style="left:130px;top:369px">文件名(N):</div>
 <div class="a" style="left:192px;top:364px;width:535px;height:26px;background:#fff;border:1px solid #7a7a7a"></div>
 <svg class="a" style="left:712px;top:374px" width="10" height="7" viewBox="0 0 10 7"><path d="M1 1 L5 5 L9 1" fill="none" stroke="#444" stroke-width="1.1"/></svg>
 <div class="a" style="left:738px;top:364px;width:188px;height:25px;background:#e1e1e1;border:1px solid #adadad"></div>
 <div class="t" style="left:742px;top:368px">所有文件 (*.*)</div>
 <svg class="a" style="left:912px;top:373px" width="10" height="7" viewBox="0 0 10 7"><path d="M1 1 L5 5 L9 1" fill="none" stroke="#444" stroke-width="1.1"/></svg>
 <div class="btn" style="left:739px;top:396px;width:86px;height:24px;border:2px solid #0078d7;line-height:20px">打开(O)</div>
 <div class="btn" style="left:839px;top:396px;width:86px;height:24px">取消</div>
 <svg class="a" style="left:932px;top:425px" width="9" height="9" viewBox="0 0 9 9"><g fill="#b5b5b5"><rect x="6" y="0" width="2" height="2"/><rect x="3" y="3" width="2" height="2"/><rect x="6" y="3" width="2" height="2"/><rect x="0" y="6" width="2" height="2"/><rect x="3" y="6" width="2" height="2"/><rect x="6" y="6" width="2" height="2"/></g></svg>
</div>
<!-- IME popup -->
<div class="a" style="left:1551px;top:192px;width:367px;height:55px;background:linear-gradient(90deg,#fff 0,#fff 55%,#f6f4fb 80%,#fdf6fa 100%);border:1px solid #c9d6e3;border-radius:3px;box-shadow:0 1px 3px rgba(0,0,0,.12)"></div>
<div class="a nw" style="left:1563px;top:194px;font-size:16px;line-height:20px;color:#2f7fd1;letter-spacing:-0.3px">li'yue</div>
<div class="a" style="left:1597px;top:196px;width:1px;height:17px;background:#d9342b"></div>
<div class="a nw" style="left:1563px;top:220px;font-size:15px;line-height:22px;color:#e0452f"><span style="font-size:14px">1</span> <span style="font-size:17px">李月</span></div>
<div class="a nw" style="left:1624px;top:220px;font-size:15px;line-height:22px;color:#2f7fd1"><span style="font-size:14px;color:#5b9be0">2</span> <span style="font-size:17px">李悦</span></div>
<div class="a nw" style="left:1686px;top:220px;font-size:15px;line-height:22px;color:#2f7fd1"><span style="font-size:14px;color:#5b9be0">3</span> <span style="font-size:17px">璃月</span></div>
<div class="a nw" style="left:1746px;top:220px;font-size:15px;line-height:22px;color:#2f7fd1"><span style="font-size:14px;color:#5b9be0">4</span> <span style="font-size:17px">李越</span></div>
<div class="a nw" style="left:1808px;top:220px;font-size:15px;line-height:22px;color:#2f7fd1"><span style="font-size:14px;color:#5b9be0">5</span> <span style="font-size:17px">里约</span></div>
<svg class="a" style="left:1872px;top:228px" width="42" height="12" viewBox="0 0 42 12"><path d="M5 2 L1.5 6 L5 10" fill="none" stroke="#dde3ea" stroke-width="1.2"/><path d="M17 2 L20.5 6 L17 10" fill="none" stroke="#2b5d94" stroke-width="1.3"/><path d="M29 4 L33.5 8.5 L38 4" fill="none" stroke="#2b5d94" stroke-width="1.3"/></svg>
<svg class="a" style="left:1891px;top:196px" width="22" height="16" viewBox="0 0 22 16"><ellipse cx="10" cy="7" rx="7" ry="4" fill="#e0712a" transform="rotate(-15 10 7)"/><circle cx="7" cy="8" r="1.6" fill="#3a2516"/><path d="M11 12 L9 15" stroke="#555" stroke-width="1"/><circle cx="19" cy="4" r="2" fill="#f3e46a"/></svg>
<!-- sogou status bar -->
<div class="a" style="left:1670px;top:890px;width:175px;height:20px;background:#fff;border:1px solid #c8d3df"></div>
<svg class="a" style="left:1641px;top:884px" width="34" height="26" viewBox="0 0 34 26"><rect x="4" y="3" width="26" height="26" rx="3" fill="#ef5a28" transform="rotate(-12 17 16)"/><path d="M23 9 Q15 6 11 10 Q9 14 16 15 Q23 16 21 20 Q18 24 10 21" fill="none" stroke="#fff" stroke-width="3.2" stroke-linecap="round"/></svg>
<div class="a nw" style="left:1680px;top:893px;font-size:15px;line-height:18px;color:#1d6fd6;font-weight:bold">中</div>
<svg class="a" style="left:1706px;top:896px" width="14" height="14" viewBox="0 0 14 14"><circle cx="3" cy="5" r="2" fill="none" stroke="#1d6fd6" stroke-width="1.3"/><path d="M10 7 Q11 10 8 13" stroke="#1d6fd6" stroke-width="2" fill="none"/></svg>
<svg class="a" style="left:1730px;top:895px" width="13" height="15" viewBox="0 0 13 15"><rect x="4" y="0" width="5" height="9" rx="2.5" fill="#1d6fd6"/><path d="M1.5 7 Q6.5 13 11.5 7 M6.5 11 V15" fill="none" stroke="#1d6fd6" stroke-width="1.4"/></svg>
<svg class="a" style="left:1752px;top:897px" width="17" height="13" viewBox="0 0 17 13"><rect x="0.8" y="0.8" width="15.4" height="12" rx="1.5" fill="none" stroke="#1d6fd6" stroke-width="1.5"/><g fill="#1d6fd6"><rect x="3" y="3" width="2" height="2"/><rect x="6" y="3" width="2" height="2"/><rect x="9" y="3" width="2" height="2"/><rect x="12" y="3" width="2" height="2"/><rect x="3" y="6" width="2" height="2"/><rect x="6" y="6" width="2" height="2"/><rect x="9" y="6" width="2" height="2"/><rect x="12" y="6" width="2" height="2"/><rect x="4" y="9" width="9" height="1.5"/></g></svg>
<svg class="a" style="left:1776px;top:893px" width="22" height="17" viewBox="0 0 22 17"><defs><linearGradient id="sh" x1="0" x2="1"><stop offset="0" stop-color="#f06a6a"/><stop offset="1" stop-color="#8a6cf0"/></linearGradient></defs><path d="M1 6 L6 3 Q9 5 12 3 L17 6 L15 9 L14 8 V17 H4 V8 L3 9Z" fill="url(#sh)"/><circle cx="17" cy="3" r="2.6" fill="#f05a40"/></svg>
<svg class="a" style="left:1802px;top:896px" width="14" height="14" viewBox="0 0 14 14"><g fill="#1d6fd6"><rect x="0" y="0" width="6" height="6" rx="1.5"/><rect x="8" y="0" width="6" height="6" rx="3"/><rect x="0" y="8" width="6" height="6" rx="1.5"/><rect x="8" y="8" width="6" height="6" rx="1.5"/></g></svg>
<svg class="a" style="left:1822px;top:895px" width="22" height="15" viewBox="0 0 22 15"><ellipse cx="9" cy="8" rx="8" ry="4.5" fill="#e0712a" transform="rotate(-12 9 8)"/><circle cx="6" cy="9" r="1.6" fill="#3a2516"/><circle cx="19" cy="5" r="2" fill="#f3e46a"/></svg>
<!-- pen cursor at bottom right -->
<div class="a" style="left:1910px;top:856px;width:4px;height:52px;background:linear-gradient(180deg,#4a4a4a 0,#6d5a4a 40%,#d9692a 80%);border-radius:2px"></div>
<div class="a" style="left:1906px;top:898px;width:12px;height:14px;border-radius:6px 6px 0 0;background:#d9692a"></div>
</body></html>
